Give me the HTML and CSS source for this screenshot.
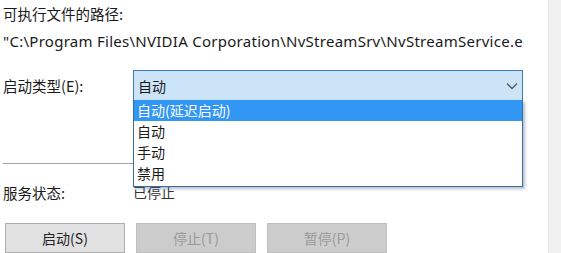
FILE: index.html
```html
<!DOCTYPE html>
<html>
<head>
	<meta charset="utf-8">
	<title>服务属性</title>
	<link rel="stylesheet" href="styles.css">
</head>
<body>
	<div class="page">
		<div class="content">
			<div class="caption">可执行文件的路径:</div>
			<div class="path">"C:\Program Files\NVIDIA Corporation\NvStreamSrv\NvStreamService.e</div>

			<div class="type-row">
				<div class="label">启动类型(E):</div>
				<div class="combo">
					<div class="combo-head">
						<span>自动</span>
						<svg class="chevron" width="12" height="8" viewBox="0 0 12 8">
							<path d="M1 1.5 L6 6.5 L11 1.5" fill="none" stroke="#5a5a5a" stroke-width="1.3"/>
						</svg>
					</div>
					<ul class="combo-list">
						<li class="selected">自动(延迟启动)</li>
						<li>自动</li>
						<li>手动</li>
						<li>禁用</li>
					</ul>
				</div>
			</div>

			<hr class="sep">

			<div class="status-row">
				<div class="label">服务状态:</div>
				<div class="value">已停止</div>
			</div>

			<div class="buttons">
				<button class="btn">启动(S)</button>
				<button class="btn" disabled>停止(T)</button>
				<button class="btn" disabled>暂停(P)</button>
			</div>
		</div>
		<div class="side"></div>
	</div>
</body>
</html>
```

FILE: styles.css
```css
html, body {
	background: #fff;
	margin: 0;
	padding: 0;
}
body {
	color: #1a1a1a;
	font: 14px "Noto Sans CJK SC", sans-serif;
	overflow: hidden;
}
.page {
	display: flex;
	height: 253px;
}
.content {
	flex: 1;
	padding: 2px 0 0 3px;
}
.side {
	background: #f0f0f0;
	border-left: 1px solid #e6e6e6;
	width: 12px;
}
.caption {
	font-size: 14.5px;
	height: 25px;
	line-height: 24px;
}
.path {
	font-family: "Noto Sans", sans-serif;
	font-size: 15px;
	height: 28px;
	letter-spacing: 0.27px;
	line-height: 28px;
	white-space: nowrap;
}
.label {
	font-size: 14.5px;
	width: 130px;
}
.type-row {
	align-items: center;
	display: flex;
	margin-top: 15px;
}
.combo {
	position: relative;
	width: 390px;
}
.combo-head {
	align-items: center;
	background: #cce4f7;
	border: 1px solid #3d7ab8;
	box-sizing: border-box;
	display: flex;
	height: 31px;
	justify-content: space-between;
	padding: 0 4px 0 4px;
}
.combo-list {
	background: #fff;
	border: 1px solid #3a6e99;
	border-top: none;
	box-shadow: 2px 2px 3px rgba(80, 110, 140, 0.45);
	box-sizing: border-box;
	left: 0;
	list-style: none;
	margin: 0;
	padding: 0 0 2px;
	position: absolute;
	top: 30px;
	width: 390px;
	z-index: 10;
}
.combo-list li {
	height: 21px;
	line-height: 21px;
	padding-left: 3px;
}
.combo-list li.selected {
	background: #3296f4;
	color: #fff;
}
.sep {
	border: none;
	border-top: 1px solid #a0a0a0;
	margin: 62px 40px 0 0;
}
.status-row {
	align-items: center;
	display: flex;
	height: 22px;
	margin-top: 17px;
}
.status-row .value {
	color: #333;
}
.buttons {
	display: flex;
	gap: 11px;
	margin-top: 20px;
	padding-left: 2px;
}
.btn {
	background: #e1e1e1;
	border: 1px solid #adadad;
	color: #222;
	font: 14px "Noto Sans CJK SC", sans-serif;
	height: 30px;
	padding: 0;
	width: 120px;
}
.btn:disabled {
	background: #cccccc;
	border-color: #bfbfbf;
	color: #9a9a9a;
}
```
